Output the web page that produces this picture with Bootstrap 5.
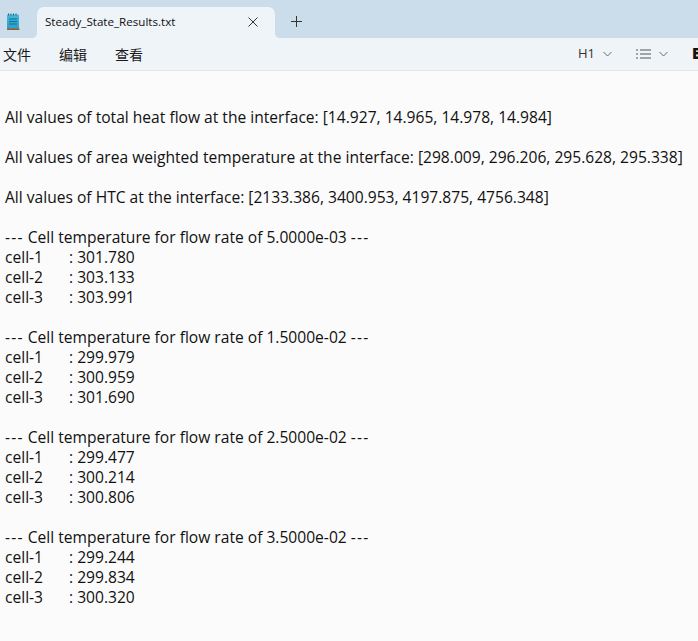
<!DOCTYPE html>
<html lang="zh">
<head>
<meta charset="utf-8">
<title>Steady_State_Results.txt</title>
<link href="https://cdn.jsdelivr.net/npm/bootstrap@5.3.0/dist/css/bootstrap.min.css" rel="stylesheet">
<style>
html,body{height:100%;overflow:hidden}
body{background:#fbfbfb;color:#111;font-family:"Open Sans","Noto Sans CJK SC",sans-serif;width:698px}
.tabbar{height:38px;background:#cbdcea;padding-top:7px}
.apptab{width:238px;height:31px;background:#eff4f9;border-radius:7px 7px 0 0;margin-left:37px;padding:0 17px 1px 8px;font-size:11.6px;color:#111}
.apptab::before,.apptab::after{content:"";position:absolute;bottom:0;width:5px;height:5px}
.apptab::before{left:-5px;background:radial-gradient(circle at 0 0,#cbdcea 4.800px,#eff4f9 5.200px)}
.apptab::after{right:-5px;background:radial-gradient(circle at 100% 0,#cbdcea 4.800px,#eff4f9 5.200px)}
.appicon{position:absolute;left:6px;top:13px}
.plusbtn{margin-left:16px;margin-top:9px}
.menubar{height:33px;background:#eff4f9;border-bottom:1px solid #e3e6e9;padding-bottom:1px;font-size:14px;color:#1a1a1a;white-space:nowrap}
.menuset{gap:28px;padding-left:3px;font-family:"Noto Sans CJK SC",sans-serif;line-height:20px}
.toolset{margin-left:435px;flex-shrink:0}
.toolh{font-size:13px;width:17px;color:#333}
.chev1{margin-left:8px}
.listic{margin-left:24px}
.chev2{margin-left:8px}
.boldlbl{font-weight:800;font-size:15px;line-height:1;color:#111;margin-left:24px}
.notetext{padding:36px 0 0 5px;font-size:15.6px;line-height:20px;white-space:nowrap}
.noteline{height:20px}
.celllbl{display:inline-block;width:64px}
.dashes{letter-spacing:1.200px}
</style>
</head>
<body class="position-relative">
<div class="tabbar d-flex align-items-start">
  <svg class="appicon" width="14" height="18" viewBox="0 0 14 18"><defs><linearGradient id="nb" x1="0" y1="0" x2="0" y2="1"><stop offset="0" stop-color="#45b8dc"/><stop offset="1" stop-color="#2a9fc4"/></linearGradient></defs><rect x="1" y="1.500" width="12" height="14.500" rx="1" fill="url(#nb)"/><rect x="1" y="15.500" width="12.500" height="1.500" fill="#a1582a"/><path d="M2.500 0.500v2M5 0.500v2M7.500 0.500v2M10 0.500v2" stroke="#1c5f80" stroke-width="1"/><path d="M3 6h8M3 8.500h8M3 11h8" stroke="#0f6f96" stroke-width="1"/></svg>
  <div class="apptab position-relative d-flex align-items-center justify-content-between">
    <span>Steady_State_Results.txt</span>
    <svg width="10" height="10" viewBox="0 0 10 10"><path d="M.5.500l9 9M9.500.500l-9 9" stroke="#333" stroke-width="1" fill="none"/></svg>
  </div>
  <svg class="plusbtn" width="11" height="11" viewBox="0 0 11 11"><path d="M5.500 0v11M0 5.500h11" stroke="#333" stroke-width="1" fill="none"/></svg>
</div>
<div class="menubar d-flex align-items-center">
  <div class="menuset d-flex flex-shrink-0"><span>文件</span><span>编辑</span><span>查看</span></div>
  <div class="toolset d-flex align-items-center">
    <span class="toolh">H1</span>
    <svg class="chev1" width="9" height="6" viewBox="0 0 9 6"><path d="M.5 1l4 4 4-4" stroke="#666" fill="none"/></svg>
    <svg class="listic" width="15" height="10" viewBox="0 0 15 10"><path d="M0 1h2M0 5h2M0 9h2M4 1h11M4 5h11M4 9h11" stroke="#555" stroke-width="1.200" fill="none"/></svg>
    <svg class="chev2" width="9" height="6" viewBox="0 0 9 6"><path d="M.5 1l4 4 4-4" stroke="#666" fill="none"/></svg>
    <span class="boldlbl">B</span>
  </div>
</div>
<main class="notetext">
<div>All values of total heat flow at the interface: [14.927, 14.965, 14.978, 14.984]</div>
<div class="noteline"></div>
<div>All values of area weighted temperature at the interface: [298.009, 296.206, 295.628, 295.338]</div>
<div class="noteline"></div>
<div>All values of HTC at the interface: [2133.386, 3400.953, 4197.875, 4756.348]</div>
<div class="noteline"></div>
<div><span class="dashes">---</span> Cell temperature for flow rate of 5.0000e-03 <span class="dashes">---</span></div>
<div><span class="celllbl">cell-1</span>: 301.780</div>
<div><span class="celllbl">cell-2</span>: 303.133</div>
<div><span class="celllbl">cell-3</span>: 303.991</div>
<div class="noteline"></div>
<div><span class="dashes">---</span> Cell temperature for flow rate of 1.5000e-02 <span class="dashes">---</span></div>
<div><span class="celllbl">cell-1</span>: 299.979</div>
<div><span class="celllbl">cell-2</span>: 300.959</div>
<div><span class="celllbl">cell-3</span>: 301.690</div>
<div class="noteline"></div>
<div><span class="dashes">---</span> Cell temperature for flow rate of 2.5000e-02 <span class="dashes">---</span></div>
<div><span class="celllbl">cell-1</span>: 299.477</div>
<div><span class="celllbl">cell-2</span>: 300.214</div>
<div><span class="celllbl">cell-3</span>: 300.806</div>
<div class="noteline"></div>
<div><span class="dashes">---</span> Cell temperature for flow rate of 3.5000e-02 <span class="dashes">---</span></div>
<div><span class="celllbl">cell-1</span>: 299.244</div>
<div><span class="celllbl">cell-2</span>: 299.834</div>
<div><span class="celllbl">cell-3</span>: 300.320</div>
</main>
</body>
</html>
